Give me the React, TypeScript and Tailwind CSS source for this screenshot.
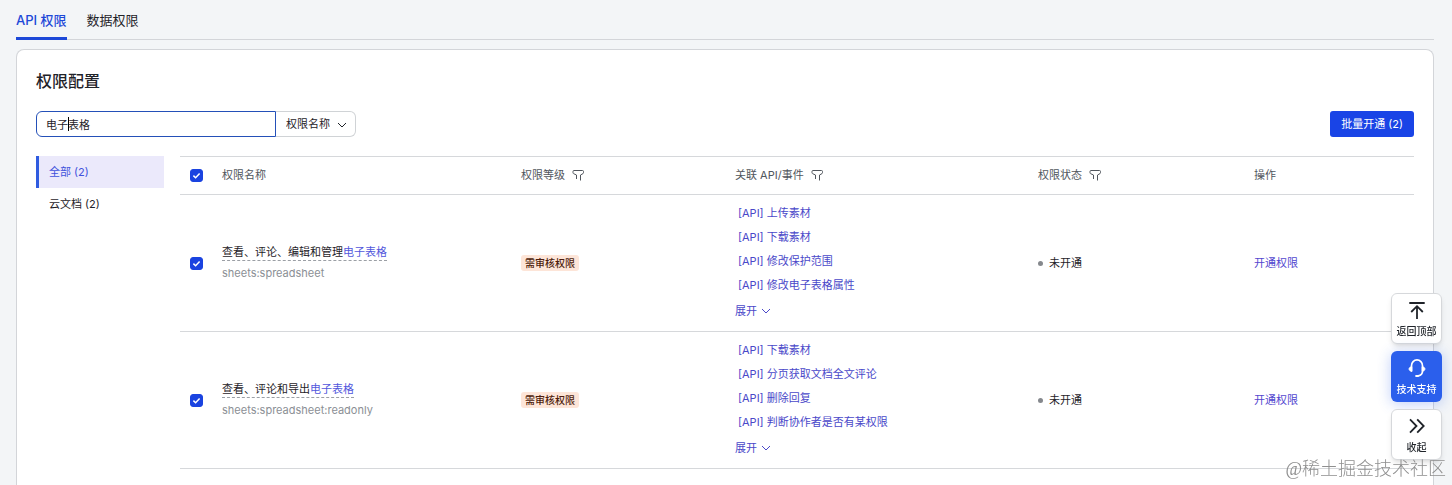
import React, { useState } from 'react'

interface Permission {
  id: string
  prefix: string
  scope: string
  apis: string[]
}

const permissions: Permission[] = [
  {
    id: 'spreadsheet',
    prefix: '查看、评论、编辑和管理',
    scope: 'sheets:spreadsheet',
    apis: ['上传素材', '下载素材', '修改保护范围', '修改电子表格属性']
  },
  {
    id: 'spreadsheet-readonly',
    prefix: '查看、评论和导出',
    scope: 'sheets:spreadsheet:readonly',
    apis: ['下载素材', '分页获取文档全文评论', '删除回复', '判断协作者是否有某权限']
  }
]

const FilterIcon = () => (
  <svg width="12" height="12" viewBox="0 0 12 12" fill="none" stroke="currentColor" strokeLinejoin="round">
    <path d="M4.500 9V5L1.500 3.600Q1 3.300 1 2.700V1.500Q1 .5 2 .5h8.500q1 0 1 1v1.200q0 .6-.5.9L8.500 5v5.500" />
  </svg>
)

const ChevronDown = () => (
  <svg width="10" height="10" viewBox="0 0 10 10" fill="none" stroke="currentColor">
    <path d="M1 3l4 4 4-4" />
  </svg>
)

const TopIcon = () => (
  <svg width="20" height="20" viewBox="0 0 20 20" fill="none" stroke="currentColor" strokeWidth="1.8">
    <path d="M2.300 3h15.400M10 19V6.500M4.200 12L10 6.200l5.800 5.800" />
  </svg>
)

const HeadsetIcon = () => (
  <svg width="20" height="20" viewBox="0 0 20 20" fill="none" stroke="currentColor" strokeWidth="1.700" strokeLinecap="round">
    <path d="M4.500 13V7.700a5.500 5.800 0 0 1 11 0V13c0 2.900-1.600 4.400-4.200 4.900" />
    <path d="M4.400 8.800c-1.500.3-2.300 1.100-2.300 2.200s.8 1.900 2.300 2.200zM15.600 8.800c1.500.3 2.300 1.100 2.300 2.200s-.8 1.900-2.300 2.200z" fill="currentColor" strokeWidth="1" />
    <path d="M9.200 18h1.600" strokeWidth="2.200" />
  </svg>
)

const CollapseIcon = () => (
  <svg width="20" height="20" viewBox="0 0 20 20" fill="none" stroke="currentColor" strokeWidth="1.800">
    <path d="M3 3.300L9.500 10 3 16.700M10.200 3.300l6.500 6.700-6.500 6.700" />
  </svg>
)

interface CheckboxProps {
  checked: boolean
  label: string
  onChange: () => void
}

const Checkbox: React.FC<CheckboxProps> = ({ checked, label, onChange }) => (
  <label className="grid w-[13px] cursor-pointer">
    <input
      type="checkbox"
      aria-label={label}
      checked={checked}
      onChange={onChange}
      className="col-start-1 row-start-1 size-[13px] appearance-none rounded-[3px] border border-gray-400 checked:border-[#1a43e0] checked:bg-[#1a43e0]"
    />
    {checked && (
      <svg className="pointer-events-none col-start-1 row-start-1 text-white" width="13" height="13" viewBox="0 0 13 13" fill="none" stroke="currentColor" strokeWidth="1.500">
        <path d="M3.400 6.600l2.200 2.100 4-4.200" />
      </svg>
    )}
  </label>
)

const App = () => {
  const [keyword, setKeyword] = useState('电子表格')
  const [selected, setSelected] = useState<string[]>(permissions.map(p => p.id))

  const allSelected = selected.length === permissions.length

  const toggle = (id: string) => {
    setSelected(prev => (prev.includes(id) ? prev.filter(item => item !== id) : [...prev, id]))
  }

  const toggleAll = () => {
    setSelected(allSelected ? [] : permissions.map(p => p.id))
  }

  return (
    <div className="flex min-h-screen flex-col bg-[#f3f5f7] pr-[18px] pl-4 font-[Inter,'Noto_Sans_CJK_SC',sans-serif] text-[11px] text-[#1f2329]">
      {/* Tabs */}
      <nav className="flex h-10 gap-5 border-b border-[#d3d5d9] text-[13px]">
        <a href="#api" className="flex h-10 items-center rounded-t-xs border-b-3 border-[#1d48d8] pt-1 font-medium text-[#1d48d8]">
          API 权限
        </a>
        <a href="#data" className="flex h-10 items-center pt-px">数据权限</a>
      </nav>

      {/* Card */}
      <main className="mt-[9px] flex-1 rounded-t-lg border border-b-0 border-[#d3d5d9] bg-white px-[19px] pt-[19px]">
        <h1 className="text-base leading-6 font-medium">权限配置</h1>

        <div className="mt-[18px] flex items-center justify-between">
          <div className="flex">
            <div className="relative">
              <input
                type="text"
                aria-label="搜索权限"
                value={keyword}
                onChange={e => setKeyword(e.target.value)}
                className="block h-[26px] w-60 rounded-l-md border border-[#2450b8] px-[9px] caret-transparent outline-none"
              />
              <span className="pointer-events-none absolute top-[6px] left-8 h-[14px] w-px bg-black" />
            </div>
            <div className="relative">
              <select
                aria-label="搜索方式"
                className="block h-[26px] w-20 appearance-none rounded-r-md border border-l-0 border-[#d0d3d6] bg-white pt-px pl-[10px] outline-none"
              >
                <option>权限名称</option>
                <option>权限标识</option>
              </select>
              <span className="pointer-events-none absolute top-[9px] right-[9px]">
                <ChevronDown />
              </span>
            </div>
          </div>
          <button className="h-[26px] rounded-[3px] bg-[#1944e6] px-[11px] text-white">
            批量开通 ({selected.length})
          </button>
        </div>

        <div className="mt-[19px] flex gap-4">
          {/* Categories */}
          <aside className="w-32 shrink-0">
            <button className="flex h-8 w-full items-center border-l-3 border-[#2f5be0] bg-[#ebe9fb] pl-[10px] text-[#3f52dc]">
              全部 (2)
            </button>
            <button className="flex h-8 w-full items-center pl-[13px]">云文档 (2)</button>
          </aside>

          <table className="w-full min-w-0 flex-1 table-fixed border-collapse text-left">
            <colgroup>
              <col className="w-8" />
              <col />
              <col className="w-[214px]" />
              <col className="w-[303px]" />
              <col className="w-[216px]" />
              <col className="w-[170px]" />
            </colgroup>
            <thead>
              <tr className="h-[38px] border-y border-[#d6d8db] text-[#51565d] [&>th]:px-[10px] [&>th]:font-normal">
                <th>
                  <Checkbox checked={allSelected} label="全选" onChange={toggleAll} />
                </th>
                <th>权限名称</th>
                <th>
                  <div className="flex items-center gap-[7px]">权限等级 <FilterIcon /></div>
                </th>
                <th>
                  <div className="flex items-center gap-[7px]">关联 API/事件 <FilterIcon /></div>
                </th>
                <th>
                  <div className="flex items-center gap-[7px]">权限状态 <FilterIcon /></div>
                </th>
                <th>操作</th>
              </tr>
            </thead>
            <tbody>
              {permissions.map(permission => (
                <tr key={permission.id} className="border-b border-[#d6d8db] [&>td]:px-[10px]">
                  <td>
                    <Checkbox
                      checked={selected.includes(permission.id)}
                      label={permission.scope}
                      onChange={() => toggle(permission.id)}
                    />
                  </td>
                  <td>
                    <div className="w-fit border-b border-dashed border-[#9b9fa5] leading-[15px]">
                      {permission.prefix}
                      <span className="text-[#5257dc]">电子表格</span>
                    </div>
                    <div className="mt-1 leading-4 text-[#8b8f95]">{permission.scope}</div>
                  </td>
                  <td>
                    <span className="block w-fit rounded-[3px] bg-[#fde5d8] px-1 text-[10px] leading-4 font-medium text-[#4e1d0c]">
                      需审核权限
                    </span>
                  </td>
                  <td className="pt-[6px] pb-2 text-[#4a48c9]">
                    <ul className="pl-[3px] leading-6">
                      {permission.apis.map(api => (
                        <li key={api}>
                          <a href="#api">[API] {api}</a>
                        </li>
                      ))}
                    </ul>
                    <button className="mt-[2px] flex h-6 items-center gap-1">
                      展开 <ChevronDown />
                    </button>
                  </td>
                  <td>
                    <div className="flex items-center gap-[6px]">
                      <span className="size-[5px] rounded-full bg-[#85888d]" />
                      未开通
                    </div>
                  </td>
                  <td>
                    <button className="block text-[#5347cf]">开通权限</button>
                  </td>
                </tr>
              ))}
            </tbody>
          </table>
        </div>
      </main>

      {/* Floating tools */}
      <div className="fixed right-[10px] bottom-[25px] flex flex-col gap-[7px] text-[10px] leading-[14px] font-medium [&>button]:flex [&>button]:size-[51px] [&>button]:flex-col [&>button]:items-center [&>button]:justify-center [&>button]:gap-1 [&>button]:rounded-md">
        <button className="border border-[#d6d8db] bg-white shadow-md">
          <TopIcon />
          返回顶部
        </button>
        <button className="bg-[#2b5fec] text-white shadow-[0_2px_14px_rgba(43,95,236,0.3)]">
          <HeadsetIcon />
          技术支持
        </button>
        <button className="border border-[#d6d8db] bg-white shadow-md">
          <CollapseIcon />
          收起
        </button>
      </div>

      {/* Watermark */}
      <p className="pointer-events-none fixed right-[6px] bottom-1 font-['Liberation_Serif','Noto_Sans_CJK_SC',serif] text-lg leading-6 font-light text-[#8f8f8f]">
        @稀土掘金技术社区
      </p>
    </div>
  )
}

export default App
